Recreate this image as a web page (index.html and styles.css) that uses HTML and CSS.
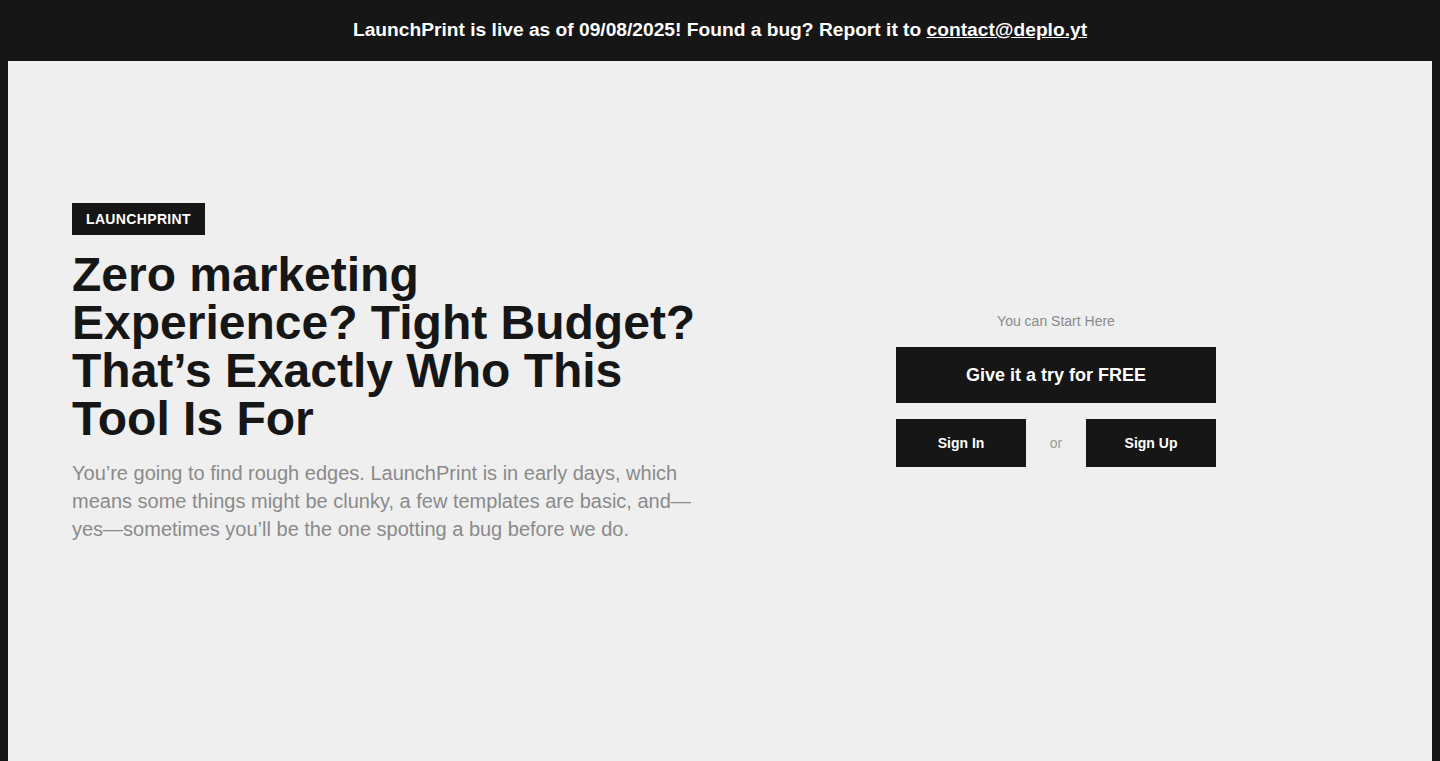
FILE: index.html
```html
<!DOCTYPE html>
<html lang="en">
<head>
<meta charset="utf-8">
<title>LaunchPrint</title>
<link rel="stylesheet" href="styles.css">
</head>
<body>
<div class="announce">LaunchPrint is live as of 09/08/2025! Found a bug? Report it to <a href="mailto:contact@deplo.yt">contact@deplo.yt</a></div>
<main class="page">
  <section class="hero">
    <div class="hero-copy">
      <span class="badge">LAUNCHPRINT</span>
      <h1 class="title">Zero marketing Experience? Tight Budget? That’s Exactly Who This Tool Is For</h1>
      <p class="lead">You’re going to find rough edges. LaunchPrint is in early days, which means some things might be clunky, a few templates are basic, and—yes—sometimes you’ll be the one spotting a bug before we do.</p>
    </div>
    <div class="hero-cta">
      <p class="cta-label">You can Start Here</p>
      <a class="btn btn-primary" href="#">Give it a try for FREE</a>
      <div class="auth-row">
        <a class="btn btn-small" href="#">Sign In</a>
        <span class="or">or</span>
        <a class="btn btn-small" href="#">Sign Up</a>
      </div>
    </div>
  </section>
</main>
</body>
</html>
```

FILE: styles.css
```css
* { box-sizing: border-box; }
html, body { margin: 0; padding: 0; }
body {
  background: #161616;
  font-family: "Liberation Sans", Arial, sans-serif;
  color: #161616;
  min-height: 100vh;
}
.announce {
  height: 61px;
  line-height: 59px;
  text-align: center;
  color: #ffffff;
  font-weight: 700;
  font-size: 19.2px;
}
.announce a { color: #ffffff; text-decoration: underline; }
.page {
  margin: 0 8px;
  background: #efefef;
  min-height: 700px;
  padding: 142px 64px 100px;
}
.hero {
  display: grid;
  grid-template-columns: 1fr 1fr;
  column-gap: 48px;
  align-items: center;
}
.hero-copy { display: flex; flex-direction: column; align-items: flex-start; }
.badge {
  display: inline-block;
  background: #161616;
  color: #ffffff;
  font-weight: 700;
  font-size: 14px;
  letter-spacing: 0.35px;
  line-height: 32px;
  height: 32px;
  padding: 0 14px;
}
.title {
  margin: 16px 0 0;
  font-size: 48px;
  line-height: 48px;
  font-weight: 700;
  color: #161616;
}
.lead {
  margin: 16px 0 34px;
  font-size: 20px;
  line-height: 28px;
  color: #8a8a8a;
}
.hero-cta {
  display: flex;
  flex-direction: column;
  align-items: center;
}
.cta-label {
  margin: 0 0 18px;
  font-size: 14px;
  line-height: 16px;
  color: #8a8a8a;
}
.btn {
  display: flex;
  align-items: center;
  justify-content: center;
  background: #161616;
  color: #ffffff;
  text-decoration: none;
  font-weight: 700;
}
.btn-primary {
  width: 320px;
  height: 56px;
  font-size: 18px;
}
.auth-row {
  margin-top: 16px;
  width: 320px;
  display: flex;
  align-items: center;
}
.btn-small {
  width: 130px;
  height: 48px;
  font-size: 14px;
}
.or {
  flex: 1;
  text-align: center;
  font-size: 14px;
  color: #9a9a9a;
}
```
